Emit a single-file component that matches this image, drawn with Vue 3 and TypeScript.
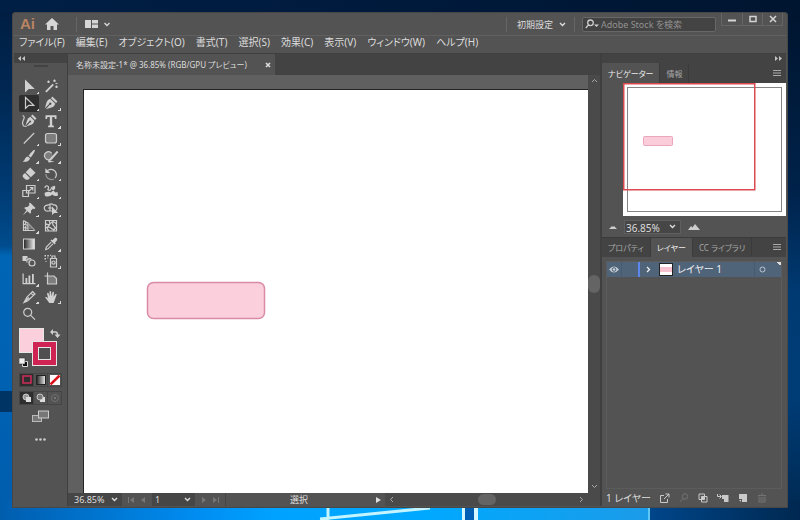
<script setup lang="ts">
import { ref } from 'vue'

interface Shape {
  d: string
  fill?: boolean
  dim?: boolean
}
interface Tool {
  name: string
  flyout?: boolean
  shapes: Shape[]
}

const menus: string[] = [
  'ファイル(F)', '編集(E)', 'オブジェクト(O)', '書式(T)', '選択(S)',
  '効果(C)', '表示(V)', 'ウィンドウ(W)', 'ヘルプ(H)',
]

const tools: Tool[] = [
  { name: '選択ツール', flyout: true, shapes: [{ d: 'M4 1.5V14.5L7.8 11H13.8Z', fill: true }] },
  { name: '自動選択ツール', shapes: [
    { d: 'M2.2 13.2L9.6 5.8L10.9 7.1L3.5 14.5Z', fill: true },
    { d: 'M11.5 1.5V4M10.2 2.8H12.8M5.5 2.5V5M4.2 3.8H6.8M13.5 7.5V10M12.2 8.8H14.8M12.5 5.5H14.5' }] },
  { name: 'ダイレクト選択ツール', flyout: true, shapes: [{ d: 'M4.5 2.5V13.3L7.8 10.4H12.8Z' }] },
  { name: 'ペンツール', flyout: true, shapes: [
    { d: 'M9.3 1.5L14.5 6.4L13 8L8 3.2ZM7.2 3.8L12.3 8.7Q11.2 12.2 7.5 12.8L2.8 14.2L6.9 9.8A1.2 1.2 0 1 0 6.1 9L1.9 13.2L3.3 8.3Q4 4.8 7.2 3.8Z', fill: true }] },
  { name: '曲線ツール', shapes: [
    { d: 'M11.5 1.5L15.5 5.4L14 7L10 3ZM9.3 3.8L13.3 7.7Q12.4 11.5 9.4 12L5.2 13.4L9 9.4A1 1 0 1 0 8.2 8.6L4.5 12.4L5.9 8Q6.3 5 9.3 3.8Z', fill: true },
    { d: 'M1.6 2.5Q4.3 3.5 2.4 7T2.8 13L5.5 13.4' }] },
  { name: '文字ツール', flyout: true, shapes: [
    { d: 'M2.5 2.2H13.5V6H12.1L11.4 4.1H9.2V12.3L10.9 12.8V14.2H5.1V12.8L6.8 12.3V4.1H4.6L3.9 6H2.5Z', fill: true }] },
  { name: '直線ツール', flyout: true, shapes: [{ d: 'M2.8 13.5L13.2 3' }] },
  { name: '長方形ツール', flyout: true, shapes: [
    { d: 'M5 3.5H11.5Q13.5 3.5 13.5 5.5V11Q13.5 13 11.5 13H5Q2.5 13 2.5 11V5.5Q2.5 3.5 5 3.5Z', fill: true, dim: true },
    { d: 'M5 3.5H11.5Q13.5 3.5 13.5 5.5V11Q13.5 13 11.5 13H5Q2.5 13 2.5 11V5.5Q2.5 3.5 5 3.5Z' }] },
  { name: 'ブラシツール', flyout: true, shapes: [
    { d: 'M13.7 1.8Q14.8 3 9.7 9.5L7.6 7.7Q12.7 1.2 13.7 1.8ZM6.9 8.4L9 10.2Q8.3 14.2 1.6 13.8Q3.8 12.5 4 10.8Q4.7 8.5 6.9 8.4Z', fill: true }] },
  { name: 'Shaper ツール', flyout: true, shapes: [
    { d: 'M5.5 3.3A4 4 0 1 0 5.5 11.3A4 4 0 1 0 5.5 3.3Z', fill: true, dim: true },
    { d: 'M8.5 5A4 4 0 1 0 7 11.4' },
    { d: 'M14 2.8L15.3 4.2L9 11.6L6.3 13.3L7 10.4ZM4.8 12L11.5 13.8L5.5 14.5Z', fill: true }] },
  { name: '消しゴムツール', flyout: true, shapes: [
    { d: 'M9.2 1.6L14.5 6.8L9.8 11.2L4.7 6.2ZM4 7L9 12L7.2 13.8H4.8L1.8 10.9V8.9Z', fill: true }] },
  { name: '回転ツール', flyout: true, shapes: [
    { d: 'M4.5 4.5Q9 2 12 5.2Q14.8 9 12 12' },
    { d: 'M11 13Q7.5 14.5 4.5 12Q2.6 10.3 2.9 8', dim: true },
    { d: 'M2.4 2.2V7H7.2Z', fill: true }] },
  { name: '拡大・縮小ツール', flyout: true, shapes: [
    { d: 'M5.5 2.5H14V10H5.5ZM1.8 7.5H7.5V13.5H1.8ZM7.5 8.5L11.5 4.8M8.8 4.5H11.8V7.5' }] },
  { name: '線幅ツール', flyout: true, shapes: [
    { d: 'M2 5Q2 2.5 4.5 3Q6.5 4 4.8 6.5Q7 8.5 8 6Q8.500 3.500 11.5 3.5' },
    { d: 'M11.5 2.5Q13.5 5 10.5 7.5L8.5 6ZM1.5 10Q5 8 8 9.500Q9.500 6.500 11.500 8.500Q12 10 14.500 9L15 12.5Q11.5 14 9.5 11.5Q6 14.500 2 13Z', fill: true }] },
  { name: '自由変形ツール', flyout: true, shapes: [
    { d: 'M9 1.5L14.5 7L13.2 8.2L12 7.6L9.9 9.7Q10.5 11.5 9.2 12.8L6.6 10.3L1.8 14.2L5.5 9.2L3.2 7Q4.6 5.5 6.5 6.1L8.5 4.1L7.9 2.8Z', fill: true }] },
  { name: 'シェイプ形成ツール', flyout: true, shapes: [
    { d: 'M7 3A3.4 3.4 0 0 1 10.5 4A3 3 0 1 1 11.5 10H5A3 3 0 1 1 5 4.2ZM5 7H10M7 3V10' },
    { d: 'M9 5.5V14L11.3 12H15Z', fill: true }] },
  { name: '遠近グリッドツール', flyout: true, shapes: [
    { d: 'M2.5 2.5V12.5H14M2.5 2.5L7 5V12.5M2.5 6L7 7.5M2.5 9.5L7 10M4.7 4V12.5' },
    { d: 'M7 5L14 12.5M8 8H10M8 10H12', dim: true }] },
  { name: 'メッシュツール', shapes: [
    { d: 'M2.5 2.5H13.5V13H2.5ZM2.5 5.5Q6 8 8 5T13.5 6M2.5 10Q6 8 8.5 10.5T13.5 9M6 2.5Q8 6 5.5 8T6 13M10.5 2.5Q8.5 6 11 8T10 13' }] },
  { name: 'グラデーションツール', shapes: [] },
  { name: 'スポイトツール', flyout: true, shapes: [
    { d: 'M12 1.8Q14.5 1.5 14.3 4L12 6.7L12.7 7.5L11.6 8.5L7.5 4.5L8.6 3.4L9.5 4.2Z', fill: true },
    { d: 'M8.2 6.2L3.3 11.1L2.7 13.5L5 12.8L9.9 7.9' }] },
  { name: 'ブレンドツール', shapes: [
    { d: 'M1.5 3H6.5V8H1.5Z', fill: true },
    { d: 'M5 5.2H9.5V10H5Z', fill: true, dim: true },
    { d: 'M5.5 8.5A2.8 2.8 0 0 1 10.3 6.5M11 7A3 3 0 1 0 11 13A3 3 0 1 0 11 7Z' }] },
  { name: 'シンボルスプレーツール', flyout: true, shapes: [
    { d: 'M7.5 5.5H13.5V14H7.5ZM9 5.5V3H12V5.5M10.5 8A1.6 1.6 0 1 0 10.5 11.2A1.6 1.6 0 1 0 10.5 8Z' },
    { d: 'M1.5 2H3V3.5H1.5ZM4.3 2H5.8V3.5H4.3ZM1.5 5H3V6.5H1.5ZM4.3 4.5H5.3V5.5H4.3ZM2.5 8H3.5V9H2.5ZM7 1.8H8V2.8H7Z', fill: true }] },
  { name: '棒グラフツール', flyout: true, shapes: [
    { d: 'M1.5 2.5H2.7V12H14.5V13.2H1.5ZM4.5 7H6.3V12H4.5ZM7.5 4.5H9.3V12H7.5ZM11 3H12.8V12H11Z', fill: true }] },
  { name: 'アートボードツール', shapes: [
    { d: 'M5 5H11L13.5 7.5V13H5Z', fill: true, dim: true },
    { d: 'M4.5 1.5V13H13.5V7.5L11 5H1.5' }] },
  { name: 'スライスツール', flyout: true, shapes: [
    { d: 'M11.5 2.5L14 5L6.5 12L3 13.5L6 8.2ZM10 4.2L12.3 6.5M3 13.5L8 8.5' }] },
  { name: '手のひらツール', flyout: true, shapes: [
    { d: 'M2 8.2Q3 7.2 5 9.3L4 4.3Q5 3.2 5.7 4.5L6.7 7.5L6.5 2.5Q7.5 1.5 8.1 2.7L8.6 7.2L9.5 2.9Q10.7 2.2 11 3.4L10.6 7.7L12.5 5Q13.9 4.6 13.6 5.8L11.8 11L10.6 14H6.3Q4.5 11.3 2 8.2Z', fill: true }] },
  { name: 'ズームツール', shapes: [{ d: 'M6.7 2.3A4 4 0 1 0 6.7 10.3A4 4 0 1 0 6.7 2.3ZM9.7 9.3L14 13.7' }] },
]

const activeTool = ref('ダイレクト選択ツール')
const zoom = ref('36.85%')
const artboard = ref('1')
const workspace = ref('初期設定')
const query = ref('')
</script>

<template>
  <div class="desktop">
    <svg class="wallpaper" viewBox="0 0 800 520" preserveAspectRatio="none" aria-hidden="true">
      <defs>
        <linearGradient id="wl" x1="0" y1="0" x2="0" y2="1">
          <stop offset="0" stop-color="#001e42" />
          <stop offset=".15" stop-color="#002752" />
          <stop offset=".35" stop-color="#003b73" />
          <stop offset=".46" stop-color="#004c8d" />
          <stop offset=".48" stop-color="#0065b5" />
          <stop offset="1" stop-color="#005dae" />
        </linearGradient>
        <linearGradient id="wb" x1="0" y1="0" x2="1" y2="0">
          <stop offset="0" stop-color="#005dae" />
          <stop offset=".3" stop-color="#008cf0" />
          <stop offset=".42" stop-color="#00a2ff" />
          <stop offset=".65" stop-color="#00a9ff" />
          <stop offset="1" stop-color="#1b9be8" />
        </linearGradient>
        <linearGradient id="wr" x1="0" y1="0" x2="0" y2="1">
          <stop offset="0" stop-color="#00152f" />
          <stop offset=".35" stop-color="#00224a" />
          <stop offset=".55" stop-color="#003a72" />
          <stop offset=".75" stop-color="#003d77" />
          <stop offset="1" stop-color="#002850" />
        </linearGradient>
        <linearGradient id="wt" x1="0" y1="0" x2="1" y2="0">
          <stop offset="0" stop-color="#001f45" />
          <stop offset=".5" stop-color="#001a3c" />
          <stop offset="1" stop-color="#00152f" />
        </linearGradient>
        <linearGradient id="wc" x1="0" y1="0" x2="1" y2="0">
          <stop offset="0" stop-color="#00468a" />
          <stop offset="1" stop-color="#002850" />
        </linearGradient>
      </defs>
      <rect width="800" height="520" fill="url(#wt)" />
      <rect y="12" width="400" height="508" fill="url(#wl)" />
      <rect y="391" width="14" height="21" fill="#003465" />
      <rect x="400" y="12" width="400" height="508" fill="url(#wr)" />
      <rect y="500" width="650" height="20" fill="url(#wb)" />
      <path d="M328 508V520M320 519L430 508" stroke="#c4f4ff" stroke-width="3" />
      <rect x="462" y="500" width="16" height="20" fill="#d4f6ff" />
      <rect x="465" y="500" width="9" height="20" fill="#005fb4" />
      <rect x="648" y="500" width="2" height="20" fill="#5bc8f5" />
      <rect x="650" y="500" width="150" height="20" fill="url(#wc)" />
    </svg>

    <main class="window">
      <header class="titlebar">
        <span class="logo">Ai</span>
        <button class="plain" aria-label="ホーム">
          <svg width="14" height="12" viewBox="0 0 14 12"><path d="M7 0L14 6.5H12V12H8.5V8H5.5V12H2V6.5H0Z" fill="#d6d6d6" /></svg>
        </button>
        <i class="rule home-rule"></i>
        <button class="plain arrange" aria-label="ドキュメントレイアウト">
          <svg width="26" height="10" viewBox="0 0 26 10"><path d="M0 1H6V9H0ZM7 1H13V4.500H7ZM7 5.500H13V9H7Z" fill="#d6d6d6" /><path d="M19.500 4L22 6.500L24.500 4" fill="none" stroke="#d6d6d6" stroke-width="1.400" /></svg>
        </button>
        <span class="grow"></span>
        <i class="rule"></i>
        <label class="pick workspace">
          <select v-model="workspace" aria-label="ワークスペース"><option>初期設定</option></select>
          <svg class="chev" width="7" height="5" viewBox="0 0 7 5"><path d="M1 1L3.500 3.500L6 1" /></svg>
        </label>
        <i class="rule"></i>
        <label class="search">
          <svg width="14" height="10" viewBox="0 0 14 10"><path d="M5.500 1A2.800 2.800 0 1 0 5.500 6.600A2.800 2.800 0 1 0 5.500 1ZM3.500 5.800L.8 9" fill="none" stroke="#cfcfcf" stroke-width="1.300" /><path d="M9 5.500H14L11.500 8Z" fill="#cfcfcf" /></svg>
          <input v-model="query" type="search" placeholder="Adobe Stock を検索" aria-label="Adobe Stock を検索" />
        </label>
        <div class="winbtns">
          <button aria-label="最小化"><svg width="8" height="8"><path d="M0 5.500H8" stroke-width="2" /></svg></button>
          <button aria-label="最大化"><svg width="8" height="8"><path d="M1 1.500H7V6.500H1Z" stroke-width="1.500" /></svg></button>
          <button aria-label="閉じる"><svg width="8" height="8"><path d="M1 1L7 7M7 1L1 7" stroke-width="1.500" /></svg></button>
        </div>
      </header>

      <nav class="menubar">
        <button v-for="m in menus" :key="m" class="plain">{{ m }}</button>
      </nav>

      <div class="work">
        <aside class="toolbox">
          <div class="strip"><svg width="7" height="5" viewBox="0 0 7 5"><path d="M3 0V5L0 2.500ZM7 0V5L4 2.500Z" /></svg></div>
          <div class="grip"></div>
          <div class="tools">
            <button
              v-for="t in tools" :key="t.name" class="tool"
              :class="{ active: t.name === activeTool, flyout: t.flyout }"
              :aria-label="t.name" @click="activeTool = t.name"
            >
              <svg width="16" height="16" viewBox="0 0 16 16">
                <template v-if="t.name === 'グラデーションツール'">
                  <defs><linearGradient id="tg"><stop offset="0" stop-color="#222" /><stop offset="1" stop-color="#eee" /></linearGradient></defs>
                  <rect x="2.500" y="3" width="11" height="10" fill="url(#tg)" stroke="#cfcfcf" />
                </template>
                <path v-for="(s, i) in t.shapes" :key="i" :d="s.d" :class="{ solid: s.fill, dim: s.dim }" />
              </svg>
            </button>
          </div>
          <div class="colors">
            <svg width="42" height="42" viewBox="0 0 42 42" role="img" aria-label="塗りと線">
              <rect x=".5" y="1.500" width="24" height="24" fill="#fccfdd" stroke="#e6e6e6" />
              <path d="M33 5H36.500Q38.500 5 38.500 8V9" fill="none" stroke="#cfcfcf" stroke-width="1.600" />
              <path d="M34 2V8L31 5ZM35.500 7.500H41.500L38.500 11Z" fill="#cfcfcf" />
              <rect x="13.500" y="14.500" width="24" height="24" fill="#cf2453" stroke="#e6e6e6" />
              <rect x="19.500" y="20.500" width="12" height="12" fill="#505050" stroke="#e6e6e6" />
              <path d="M3.500 34.500H8.500V39.500H3.500Z" fill="#111" stroke="#ddd" />
              <rect x="0" y="31" width="6" height="6" fill="#eee" stroke="#222" stroke-width=".5" />
            </svg>
          </div>
          <div class="modes">
            <button class="on" aria-label="カラー"><svg width="12" height="10"><rect x="2" y="1" width="8" height="7" fill="none" stroke="#d12c58" stroke-width="1.500" /></svg></button>
            <button aria-label="グラデーション"><svg width="12" height="10"><rect x="1.500" y=".5" width="9" height="9" fill="url(#tg)" stroke="#222" /></svg></button>
            <button aria-label="なし"><svg width="12" height="10"><rect x="1" width="10" height="10" fill="#fff" /><path d="M1.500 9.500L10.500 .5" stroke="#d9121a" stroke-width="2.500" /></svg></button>
          </div>
          <div class="modes">
            <button class="on" aria-label="標準描画"><svg width="12" height="10"><circle cx="5" cy="4" r="3" fill="#999" stroke="#c8c8c8" /><rect x="5" y="4" width="5" height="5" fill="#ddd" /></svg></button>
            <button aria-label="背面描画"><svg width="12" height="10"><rect x="5" y="4" width="5" height="5" fill="#ddd" /><circle cx="5" cy="4" r="3" fill="#777" stroke="#c8c8c8" /></svg></button>
            <button aria-label="内側描画"><svg width="12" height="10"><circle cx="6" cy="5" r="3.500" fill="none" stroke="#707070" /><rect x="5" y="4" width="2" height="2" fill="#777" /></svg></button>
          </div>
          <button class="plain screen" aria-label="スクリーンモード">
            <svg width="17" height="13"><rect x=".5" y="5.500" width="9" height="6" fill="#777" stroke="#bbb" /><rect x="6.500" y="1" width="10" height="7" fill="#777" stroke="#ccc" /></svg>
          </button>
          <button class="plain more" aria-label="ツールバーを編集"><svg width="11" height="3"><circle cx="1.500" cy="1.500" r="1.300" fill="#ccc" /><circle cx="5.500" cy="1.500" r="1.300" fill="#ccc" /><circle cx="9.500" cy="1.500" r="1.300" fill="#ccc" /></svg></button>
        </aside>

        <section class="document">
          <div class="doctabs">
            <div class="doctab">
              <span>名称未設定-1* @ 36.85% (RGB/GPU プレビュー)</span>
              <button class="plain" aria-label="タブを閉じる"><svg width="6" height="6"><path d="M1 1L5 5M5 1L1 5" stroke="#ddd" stroke-width="1.600" /></svg></button>
            </div>
          </div>
          <div class="stage">
            <svg class="artboard" role="img" aria-label="アートボード"><rect x="63.500" y="192.500" width="117" height="36" rx="6" fill="#fbd0dc" stroke="#d98aa4" stroke-width="1.500" /></svg>
            <div class="vscroll">
              <svg width="7" height="5" viewBox="0 0 7 5"><path d="M1 4L3.500 1.500L6 4" /></svg>
              <span class="thumb"></span>
              <svg width="7" height="5" viewBox="0 0 7 5"><path d="M1 1L3.500 3.500L6 1" /></svg>
            </div>
          </div>
          <footer class="status">
            <label class="pick zoompick">
              <select v-model="zoom" aria-label="表示倍率"><option>36.85%</option></select>
              <svg class="chev" width="7" height="5" viewBox="0 0 7 5"><path d="M1 1L3.500 3.500L6 1" /></svg>
            </label>
            <div class="pager">
              <button class="plain" aria-label="最初"><svg width="6" height="6"><path d="M0 0H1V6H0ZM6 0V6L2 3Z" /></svg></button>
              <button class="plain" aria-label="前へ"><svg width="6" height="6"><path d="M5 0V6L1 3Z" /></svg></button>
            </div>
            <label class="pick boardpick">
              <select v-model="artboard" aria-label="アートボード番号"><option>1</option></select>
              <svg class="chev" width="7" height="5" viewBox="0 0 7 5"><path d="M1 1L3.500 3.500L6 1" /></svg>
            </label>
            <div class="pager">
              <button class="plain" aria-label="次へ"><svg width="6" height="6"><path d="M1 0V6L5 3Z" /></svg></button>
              <button class="plain" aria-label="最後"><svg width="6" height="6"><path d="M0 0V6L4 3ZM5 0H6V6H5Z" /></svg></button>
            </div>
            <span class="current">選択</span>
            <button class="plain play" aria-label="表示内容"><svg width="5" height="6"><path d="M0 0V6L5 3Z" fill="#ddd" /></svg></button>
            <div class="hscroll">
              <svg width="5" height="7" viewBox="0 0 5 7"><path d="M4 1L1.500 3.500L4 6" /></svg>
              <span class="thumb"></span>
              <svg width="5" height="7" viewBox="0 0 5 7"><path d="M1 1L3.500 3.500L1 6" /></svg>
            </div>
          </footer>
        </section>

        <aside class="dock">
          <div class="strip right"><svg width="7" height="5" viewBox="0 0 7 5"><path d="M0 0V5L3 2.500ZM4 0V5L7 2.500Z" /></svg></div>
          <div class="tabs">
            <button class="active">ナビゲーター</button>
            <button>情報</button>
            <span class="grow"></span>
            <svg class="burger" width="8" height="7"><path d="M0 .5H8M0 3H8M0 5.500H8" /></svg>
          </div>
          <div class="navigator">
            <svg class="preview" viewBox="0 0 163 133" role="img" aria-label="プレビュー">
              <rect width="163" height="133" fill="#fff" />
              <rect x="4.500" y="4.500" width="154" height="124" fill="none" stroke="#858585" />
              <rect x="20.500" y="53.500" width="29" height="9" rx="1" fill="#fbcddb" stroke="#eba6bb" />
              <rect x=".75" y=".75" width="131" height="106" fill="none" stroke="#db4a4e" stroke-width="1.500" />
            </svg>
            <div class="navzoom">
              <button class="plain" aria-label="ズームアウト"><svg width="8" height="4"><path d="M0 4L3 1L4 2L5 1L8 4Z" fill="#ccc" /></svg></button>
              <label class="pick navpick">
                <select v-model="zoom" aria-label="ナビゲーターの倍率"><option>36.85%</option></select>
                <svg class="chev" width="7" height="5" viewBox="0 0 7 5"><path d="M1 1L3.500 3.500L6 1" /></svg>
              </label>
              <button class="plain" aria-label="ズームイン"><svg width="12" height="6"><path d="M0 6L3 2L4.500 3.500L7 0L12 6Z" fill="#ccc" /></svg></button>
            </div>
          </div>
          <div class="tabs lower">
            <button>プロパティ</button>
            <button class="active">レイヤー</button>
            <button>CC ライブラリ</button>
            <span class="grow"></span>
            <svg class="burger" width="8" height="7"><path d="M0 .5H8M0 3H8M0 5.500H8" /></svg>
          </div>
          <div class="layers">
            <div class="list">
              <div class="layer">
                <button class="plain eye" aria-label="表示の切り替え"><svg width="10" height="7" viewBox="0 0 10 7"><path d="M0 3.500Q5-2.500 10 3.500Q5 9.500 0 3.500Z" fill="#c5cdd5" /><circle cx="5" cy="3.500" r="1.800" fill="#c5cdd5" stroke="#4c6178" /></svg></button>
                <span class="lock"></span>
                <span class="mark"></span>
                <button class="plain open" aria-label="展開"><svg width="5" height="7" viewBox="0 0 5 7"><path d="M1 1L3.500 3.500L1 6" fill="none" stroke="#eee" stroke-width="1.300" /></svg></button>
                <span class="mini"></span>
                <span class="name">レイヤー 1</span>
                <button class="plain target" aria-label="ターゲット"><svg width="7" height="7"><circle cx="3.500" cy="3.500" r="2.500" fill="none" stroke="#bcc7d2" /></svg></button>
                <span class="corner"></span>
              </div>
            </div>
            <footer class="layerbar">
              <span>1 レイヤー</span>
              <button class="plain" aria-label="書き出し"><svg width="10" height="10"><path d="M4 2.500H.5V9.500H7.500V6M4 6L9 1M5.500 1H9V4.500" /></svg></button>
              <button class="plain off" aria-label="検索"><svg width="10" height="10"><path d="M6 .8A2.700 2.700 0 1 0 6 6.200A2.700 2.700 0 1 0 6 .8ZM4 5.500L.8 9" /></svg></button>
              <button class="plain" aria-label="マスク"><svg width="10" height="10"><path d="M1 1H6.500V6.500H1ZM3.500 3.500H9V9H3.500Z" /><path d="M3.500 3.500H6.500V6.500H3.500Z" class="solid" /></svg></button>
              <button class="plain" aria-label="サブレイヤー"><svg width="12" height="10"><path d="M.5 1V3.500H4M2.500 1.500L4.500 3.500L2.500 5.500" /><path d="M5 2H11.500V9H7V6H5Z" class="solid" /></svg></button>
              <button class="plain" aria-label="新規レイヤー"><svg width="10" height="10"><path d="M1 1H9V9H4V6H1ZM1 7L3 9V7Z" class="solid" /></svg></button>
              <button class="plain off" aria-label="削除"><svg width="10" height="10"><path d="M1 2.500H9M4 1H6M2 3.500V9H8V3.500M4 4V8M6 4V8" /></svg></button>
            </footer>
          </div>
        </aside>
      </div>
    </main>
  </div>
</template>

<style>
body {
  margin: 0;
  background: #002750;
}
</style>

<style scoped>
* {
  box-sizing: border-box;
}
.desktop {
  position: relative;
  display: flex;
  height: 100vh;
  padding: 12px;
  font-family: "Noto Sans", "Noto Sans CJK JP", sans-serif;
  font-feature-settings: "palt";
  font-size: 9px;
  color: #dcdcdc;
}
.wallpaper {
  position: absolute;
  inset: 0;
  width: 100%;
  height: 100%;
}
.window {
  position: relative;
  display: flex;
  flex: 1;
  flex-direction: column;
  min-width: 0;
  padding: 0 1px 1px;
  background: #535353;
  border: 1px solid #474747;
  border-radius: 3px 3px 0 0;
}
button,
select,
input {
  margin: 0;
  padding: 0;
  font: inherit;
  font-feature-settings: inherit;
  color: inherit;
  background: none;
  border: 0;
  border-radius: 0;
}
svg {
  display: block;
  flex: none;
}
.plain {
  display: flex;
  align-items: center;
  justify-content: center;
}
.grow {
  flex: 1;
}
.titlebar {
  display: flex;
  flex: none;
  align-items: center;
  height: 23px;
  border-bottom: 1px solid #606060;
}
.logo {
  width: 26px;
  padding-left: 6px;
  font-family: "Liberation Sans", sans-serif;
  font-size: 15px;
  font-weight: 700;
  line-height: 20px;
  color: #b98463;
}
.titlebar > .plain {
  margin-left: 5px;
}
.rule {
  width: 1px;
  height: 15px;
  background: #666;
}
.home-rule {
  margin-left: 17px;
}
.titlebar > .arrange {
  margin-left: 8px;
}
.pick {
  position: relative;
  display: flex;
  align-items: center;
}
.pick select {
  width: 100%;
  height: 100%;
  appearance: none;
}
.chev {
  position: absolute;
  right: 4px;
  fill: none;
  stroke: #ddd;
  stroke-width: 1.4;
  pointer-events: none;
}
.workspace {
  width: 67px;
  height: 16px;
  padding-left: 10px;
}
.workspace .chev {
  right: 8px;
}
.search {
  display: flex;
  align-items: center;
  gap: 2px;
  width: 134px;
  height: 15px;
  margin-left: 7px;
  padding-left: 2px;
  background: #434343;
  border: 1px solid #676767;
  border-radius: 2px;
}
.search input {
  flex: 1;
  min-width: 0;
  outline: 0;
  appearance: none;
}
.search input::placeholder {
  color: #929292;
  opacity: 1;
}
.winbtns {
  display: flex;
  align-self: flex-start;
  height: 13px;
  margin: 0 3px 0 5px;
  border: 1px solid #656565;
  border-top: 0;
}
.winbtns button {
  display: flex;
  align-items: center;
  justify-content: center;
  width: 20px;
}
.winbtns button + button {
  border-left: 1px solid #656565;
}
.winbtns path {
  fill: none;
  stroke: #d5d5d5;
}
.menubar {
  display: flex;
  flex: none;
  gap: 11px;
  height: 17px;
  padding-left: 5px;
  font-size: 10px;
  line-height: 12px;
}
.menubar .plain {
  height: 12px;
  white-space: nowrap;
}
.work {
  display: flex;
  flex: 1;
  min-height: 0;
  background: #3f3f3f;
  border-top: 1px solid #3f3f3f;
}
.toolbox {
  display: flex;
  flex: none;
  flex-direction: column;
  align-items: center;
  width: 53px;
  background: #535353;
}
.strip {
  display: flex;
  flex: none;
  align-items: center;
  align-self: stretch;
  height: 9px;
  padding: 0 4px;
  background: #434343;
}
.strip.right {
  justify-content: flex-end;
}
.strip path {
  fill: #c2c2c2;
}
.grip {
  width: 14px;
  height: 2px;
  margin: 2px 0 10px;
  background: #434343;
}
.tools {
  display: grid;
  flex: none;
  grid-template-columns: 20px 20px;
  grid-template-rows: repeat(14, 1fr);
  column-gap: 2px;
  height: 246px;
}
.tools,
.colors,
.modes {
  align-self: flex-start;
  margin-left: 5px;
}
.tool {
  position: relative;
  display: flex;
  align-items: center;
  justify-content: center;
  min-height: 0;
  border-radius: 2px;
}
.tool.active {
  background: #2e2e2e;
}
.tool.flyout::after {
  position: absolute;
  right: 0;
  bottom: 1px;
  width: 3px;
  height: 3px;
  content: "";
  background: linear-gradient(135deg, transparent 50%, #d6d6d6 50%);
}
.tool path {
  fill: none;
  stroke: #cdcdcd;
  stroke-width: 1.2;
}
.tool path.solid {
  fill: #d0d0d0;
  stroke: none;
}
.tool path.dim {
  stroke: #999;
}
.tool path.solid.dim {
  fill: #7d7d7d;
  stroke: none;
}
.colors {
  margin-top: 4px;
}
.modes {
  display: flex;
  gap: 1px;
  margin-top: 4px;
  padding: 1px;
  background: #454545;
}
.modes button {
  display: flex;
  align-items: center;
  justify-content: center;
  width: 13px;
  height: 12px;
  background: #535353;
}
.modes button.on {
  background: #2e2e2e;
}
.screen {
  margin-top: 5px;
}
.more {
  margin-top: 13px;
  padding: 2px;
}
.document {
  display: flex;
  flex: 1;
  flex-direction: column;
  min-width: 0;
  margin: 0 2px 0 1px;
}
.doctabs {
  display: flex;
  flex: none;
  height: 21px;
  background: #434343;
}
.doctab {
  display: flex;
  align-items: center;
  justify-content: space-between;
  width: 207px;
  padding: 0 4px 0 8px;
  font-size: 8px;
  white-space: nowrap;
  background: #535353;
}
.stage {
  display: flex;
  flex: 1;
  min-height: 0;
  background: #606060;
}
.artboard {
  flex: 1;
  width: 0;
  min-width: 0;
  margin: 14px 0 0 15px;
  background: #fff;
  border: solid #262323;
  border-width: 1px 0 0 1px;
}
.vscroll {
  display: flex;
  flex: none;
  flex-direction: column;
  align-items: center;
  justify-content: space-between;
  width: 12px;
  padding: 3px 0 4px;
  background: #4a4a4a;
}
.vscroll path,
.hscroll path {
  fill: none;
  stroke: #a8a8a8;
}
.thumb {
  width: 12px;
  height: 18px;
  background: #646464;
  border-radius: 6px;
}
.status {
  display: flex;
  flex: none;
  align-items: center;
  height: 13px;
  background: #535353;
}
.zoompick {
  width: 54px;
  height: 13px;
  padding-left: 6px;
  background: #464646;
}
.pager {
  display: flex;
  justify-content: space-evenly;
  width: 30px;
}
.pager path {
  fill: #777;
}
.boardpick {
  width: 43px;
  height: 13px;
  padding-left: 3px;
  background: #464646;
}
.current {
  flex: 1;
  text-align: center;
  border-left: 1px solid #464646;
}
.play {
  width: 13px;
}
.hscroll {
  display: flex;
  align-items: center;
  justify-content: space-between;
  width: 215px;
  height: 13px;
  padding: 0 16px 0 4px;
  background: #4a4a4a;
}
.hscroll .thumb {
  width: 18px;
  height: 11px;
}
.dock {
  display: flex;
  flex: none;
  flex-direction: column;
  width: 184px;
  background: #535353;
}
.tabs {
  display: flex;
  flex: none;
  align-items: stretch;
  height: 20px;
  padding-right: 5px;
  font-size: 8px;
  background: #434343;
}
.tabs button {
  padding: 0 6px;
  color: #a8a8a8;
  white-space: nowrap;
  border-right: 1px solid #3b3b3b;
}
.tabs button.active {
  color: #ebebeb;
  background: #535353;
}
.burger {
  align-self: center;
}
.burger path {
  stroke: #aaa;
}
.navigator {
  display: flex;
  flex: none;
  flex-direction: column;
  padding-left: 21px;
}
.preview {
  width: 100%;
}
.navzoom {
  display: flex;
  align-items: center;
  gap: 7px;
  height: 21px;
  margin-left: -16px;
  padding-left: 2px;
}
.navpick {
  width: 57px;
  height: 14px;
  padding-left: 1px;
  font-size: 10px;
  background: #464646;
  border: 1px solid #5f5f5f;
}
.lower {
  border-top: 1px solid #3b3b3b;
}
.layers {
  display: flex;
  flex: 1;
  flex-direction: column;
  min-height: 0;
  padding: 4px 4px 0;
}
.list {
  flex: 1;
  border: 1px solid #5c5c5c;
}
.layer {
  display: flex;
  align-items: stretch;
  height: 15px;
  background: #4f6379;
}
.eye {
  width: 14px;
}
.lock {
  width: 17px;
  border-left: 1px solid #465a70;
}
.mark {
  width: 2px;
  margin-right: 3px;
  background: #5d86ee;
}
.open {
  width: 11px;
}
.mini {
  width: 14px;
  margin: 1px 4px 1px 5px;
  background: linear-gradient(#fff 25%, #f8c3d0 25% 70%, #fff 70%);
  border: 1px solid #222;
}
.name {
  flex: 1;
  font-size: 10px;
  line-height: 15px;
  color: #eee;
}
.target {
  width: 16px;
  border-left: 1px solid #465a70;
}
.corner {
  width: 11px;
  background: linear-gradient(45deg, transparent 50%, #ddd 50%) right top / 4px 4px no-repeat;
}
.layerbar {
  display: flex;
  align-items: center;
  gap: 9px;
  height: 17px;
  padding-right: 16px;
  font-size: 10px;
  white-space: nowrap;
}
.layerbar span {
  flex: 1;
}
.layerbar path {
  fill: none;
  stroke: #c9c9c9;
}
.layerbar path.solid {
  fill: #c9c9c9;
  stroke: none;
}
.layerbar .off path {
  stroke: #747474;
}
</style>
